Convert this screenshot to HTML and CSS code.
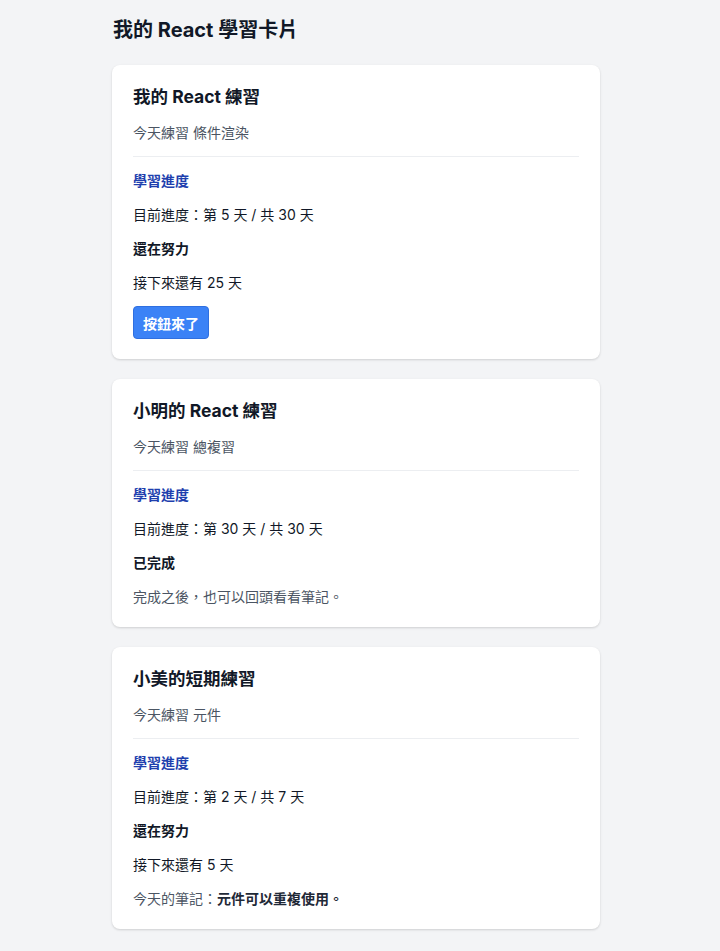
FILE: index.html
```html
<!DOCTYPE html>
<html lang="zh-Hant">
<head>
<meta charset="utf-8">
<title>我的 React 學習卡片</title>
<link rel="stylesheet" href="styles.css">
</head>
<body>
<main class="page">
  <h1 class="page-title">我的 React 學習卡片</h1>

  <section class="card">
    <h2 class="card-title">我的 React 練習</h2>
    <p class="card-sub">今天練習 條件渲染</p>
    <hr class="divider">
    <p class="label">學習進度</p>
    <p class="text">目前進度：第 5 天 / 共 30 天</p>
    <p class="status">還在努力</p>
    <p class="text">接下來還有 25 天</p>
    <button class="btn" type="button">按鈕來了</button>
  </section>

  <section class="card">
    <h2 class="card-title">小明的 React 練習</h2>
    <p class="card-sub">今天練習 總複習</p>
    <hr class="divider">
    <p class="label">學習進度</p>
    <p class="text">目前進度：第 30 天 / 共 30 天</p>
    <p class="status">已完成</p>
    <p class="muted">完成之後，也可以回頭看看筆記。</p>
  </section>

  <section class="card">
    <h2 class="card-title">小美的短期練習</h2>
    <p class="card-sub">今天練習 元件</p>
    <hr class="divider">
    <p class="label">學習進度</p>
    <p class="text">目前進度：第 2 天 / 共 7 天</p>
    <p class="status">還在努力</p>
    <p class="text">接下來還有 5 天</p>
    <p class="muted">今天的筆記：<strong class="note">元件可以重複使用。</strong></p>
  </section>
</main>
</body>
</html>
```

FILE: styles.css
```css
html, body {
  margin: 0;
  padding: 0;
  background: #f3f4f6;
}
body {
  font-family: Inter, "Noto Sans CJK TC", "Noto Sans", sans-serif;
  color: #111827;
}
.page {
  width: 488px;
  margin: 0 0 0 112px;
  padding: 16px 0 20px;
  display: flex;
  flex-direction: column;
  gap: 20px;
}
.page-title {
  margin: 0 0 1px 1px;
  font-size: 20px;
  line-height: 28px;
  font-weight: 700;
  color: #111827;
}
.card {
  background: #ffffff;
  border-radius: 8px;
  box-shadow: 0 1px 3px rgba(0, 0, 0, 0.10), 0 1px 2px rgba(0, 0, 0, 0.06);
  padding: 20px 21px 20px 21px;
  display: flex;
  flex-direction: column;
  gap: 13px;
  align-items: flex-start;
}
.card p, .card h2 {
  margin: 0;
}
.card-title {
  font-size: 17.5px;
  line-height: 24px;
  font-weight: 700;
  color: #111827;
}
.card-sub {
  font-size: 14px;
  line-height: 21px;
  color: #4b5563;
}
.divider {
  align-self: stretch;
  margin: 0;
  border: 0;
  height: 1px;
  background: #eceef1;
}
.label {
  font-size: 14px;
  line-height: 21px;
  font-weight: 700;
  color: #1e3fae;
}
.text {
  font-size: 14px;
  line-height: 21px;
  color: #111827;
}
.status {
  font-size: 14px;
  line-height: 21px;
  font-weight: 700;
  color: #111827;
}
.muted {
  font-size: 14px;
  line-height: 21px;
  color: #4b5563;
}
.note {
  font-weight: 700;
  color: #1f2937;
}
.btn {
  height: 33px;
  padding: 0 9px;
  background: #3b82f6;
  border: 1px solid #2f6fe0;
  border-radius: 4px;
  color: #ffffff;
  font-family: Inter, "Noto Sans CJK TC", sans-serif;
  font-size: 14px;
  font-weight: 700;
  cursor: pointer;
}
```
